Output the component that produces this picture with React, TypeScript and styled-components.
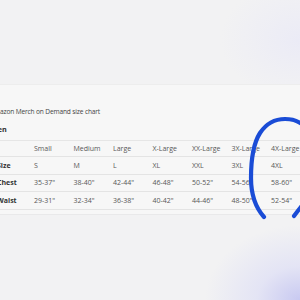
import React from "react";
import styled, { createGlobalStyle } from "styled-components";

const GlobalStyle = createGlobalStyle`
  html, body {
    margin: 0;
    padding: 0;
    width: 300px;
    height: 300px;
    overflow: hidden;
  }
  body {
    font-family: "Open Sans", "Noto Sans", sans-serif;
    background:
      radial-gradient(ellipse 95px 75px at 300px 300px, #c8c9f1 0%, rgba(218, 219, 246, 0.6) 45%, rgba(240, 240, 242, 0) 100%),
      radial-gradient(ellipse 80px 60px at 300px 40px, #ebebf6 0%, rgba(244, 244, 245, 0) 100%),
      #f2f2f3;
  }
`;

const Screen = styled.div`
  position: relative;
  width: 300px;
  height: 300px;
  overflow: hidden;
  padding-top: 84px;
  box-sizing: border-box;
`;

const Card = styled.div`
  margin-left: -9px;
  width: 330px;
  height: 131px;
  box-sizing: border-box;
  padding-top: 22px;
  background: #f7f7f7;
  border-top: 1px solid #ededed;
  border-bottom: 1px solid #e9e9ea;
`;

const Title = styled.div`
  font-size: 6.6px;
  letter-spacing: -0.15px;
  line-height: 9px;
  color: #444;
  margin-left: -1px;
  margin-bottom: 8px;
`;

const Heading = styled.div`
  font-size: 7.2px;
  font-weight: 700;
  line-height: 10px;
  color: #2f2f2f;
  margin-bottom: 6px;
`;

const Table = styled.div`
  display: grid;
  grid-template-columns: 37px repeat(7, 39.5px);
  margin-left: 6px;
  border-top: 1px solid #e6e6e6;
`;

const Cell = styled.div<{ $head?: boolean; $label?: boolean }>`
  height: ${(p) => (p.$head ? "15px" : "16.5px")};
  display: flex;
  align-items: center;
  font-size: 7px;
  font-weight: ${(p) => (p.$label ? 700 : 400)};
  color: ${(p) => (p.$label ? "#333" : "#585858")};
  border-bottom: 1px solid #e4e4e4;
  white-space: nowrap;
`;

const Scribble = styled.svg`
  position: absolute;
  left: 0;
  top: 0;
  pointer-events: none;
`;

const sizes = ["Small", "Medium", "Large", "X-Large", "XX-Large", "3X-Large", "4X-Large"];
const rows = [
  { label: "Size", values: ["S", "M", "L", "XL", "XXL", "3XL", "4XL"] },
  { label: "Chest", values: ["35-37\"", "38-40\"", "42-44\"", "46-48\"", "50-52\"", "54-56\"", "58-60\""] },
  { label: "Waist", values: ["29-31\"", "32-34\"", "36-38\"", "40-42\"", "44-46\"", "48-50\"", "52-54\""] },
];

const App = () => {
  return (
    <Screen>
      <GlobalStyle />
      <Card>
        <Title>Amazon Merch on Demand size chart</Title>
        <Heading>Men</Heading>
        <Table>
          <Cell $head />
          {sizes.map((s) => (
            <Cell $head key={s}>
              {s}
            </Cell>
          ))}
          {rows.map((r) => (
            <React.Fragment key={r.label}>
              <Cell $label>{r.label}</Cell>
              {r.values.map((v, i) => (
                <Cell key={i}>{v}</Cell>
              ))}
            </React.Fragment>
          ))}
        </Table>
      </Card>
      <Scribble width="300" height="300" viewBox="0 0 300 300">
        <path
          d="M 264 217 C 256 208, 251 194, 251 178 C 251 160, 253 144, 260 133 C 266 124, 275 119, 285 119 C 293 119, 299 121, 304 126"
          fill="none"
          stroke="#1a4cd6"
          strokeWidth="4.2"
          strokeLinecap="round"
        />
        <path
          d="M 294 216 C 297 212, 300 208, 304 203"
          fill="none"
          stroke="#1a4cd6"
          strokeWidth="4.2"
          strokeLinecap="round"
        />
      </Scribble>
    </Screen>
  );
};

export default App;
